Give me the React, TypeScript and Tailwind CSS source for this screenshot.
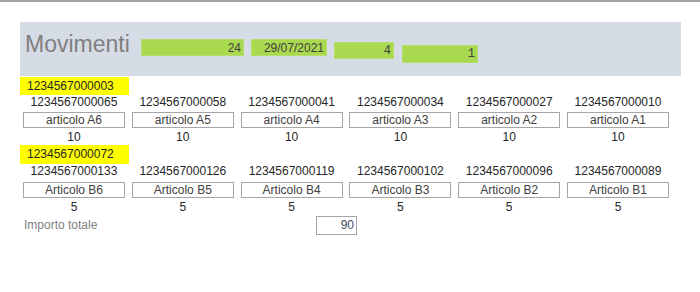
import React from 'react';

interface Item {
  code: string;
  name: string;
  qty: string;
}

const groupA: Item[] = [
  { code: '1234567000065', name: 'articolo A6', qty: '10' },
  { code: '1234567000058', name: 'articolo A5', qty: '10' },
  { code: '1234567000041', name: 'articolo A4', qty: '10' },
  { code: '1234567000034', name: 'articolo A3', qty: '10' },
  { code: '1234567000027', name: 'articolo A2', qty: '10' },
  { code: '1234567000010', name: 'articolo A1', qty: '10' },
];

const groupB: Item[] = [
  { code: '1234567000133', name: 'Articolo B6', qty: '5' },
  { code: '1234567000126', name: 'Articolo B5', qty: '5' },
  { code: '1234567000119', name: 'Articolo B4', qty: '5' },
  { code: '1234567000102', name: 'Articolo B3', qty: '5' },
  { code: '1234567000096', name: 'Articolo B2', qty: '5' },
  { code: '1234567000089', name: 'Articolo B1', qty: '5' },
];

const ItemRow: React.FC<{ items: Item[]; codeH: string }> = ({ items, codeH }) => (
  <div className="grid grid-cols-[repeat(6,102px)] gap-x-[6.8px] pl-[23px]">
    {items.map(it => (
      <div key={it.code} className="flex flex-col items-center">
        <div className={`${codeH} w-full flex items-end justify-center text-[#262626]`}>{it.code}</div>
        <div className="h-[16px] w-full border border-[#a6a6a6] bg-white flex items-center justify-center text-[#404040] leading-none">
          {it.name}
        </div>
        <div className="h-[17px] w-full flex items-center justify-center text-[#262626]">{it.qty}</div>
      </div>
    ))}
  </div>
);

export default function App() {
  return (
    <div className="w-[700px] h-[292px] bg-white overflow-hidden text-[12px]" style={{ fontFamily: '"Liberation Sans", Arial, sans-serif' }}>
      <div className="h-[2px] bg-[#a0a0a0]" />

      {/* Header */}
      <div className="mt-[20px] ml-[20px] w-[661px] h-[54px] bg-[#d6dce5] flex items-start">
        <div className="ml-[5px] mt-[7px] w-[116px] text-[23px] leading-[30px] text-[#7f7f7f]">Movimenti</div>
        <div className="mt-[17px] w-[103px] h-[17px] bg-[#a9d94f] border border-[#b5df6a] flex items-center justify-end pr-[2px] text-[#404040]">24</div>
        <div className="ml-[7px] mt-[17px] w-[76px] h-[17px] bg-[#a9d94f] border border-[#b5df6a] flex items-center justify-end pr-[2px] text-[#404040]">29/07/2021</div>
        <div className="ml-[7px] mt-[20px] w-[60px] h-[17px] bg-[#a9d94f] border border-[#b5df6a] flex items-center justify-end pr-[2px] text-[#404040]" style={{ fontFamily: '"Liberation Mono", monospace' }}>4</div>
        <div className="ml-[8px] mt-[23px] w-[76px] h-[18px] bg-[#a9d94f] border border-[#b5df6a] flex items-center justify-end pr-[2px] text-[#404040]" style={{ fontFamily: '"Liberation Mono", monospace' }}>1</div>
      </div>

      {/* Group A */}
      <div className="mt-[1px] ml-[20px] w-[109px] h-[18px] bg-[#ffff00] pl-[7px] leading-[18px] text-[#262626]">1234567000003</div>
      <ItemRow items={groupA} codeH="h-[17px] pb-[1px]" />

      {/* Group B */}
      <div className="ml-[20px] w-[109px] h-[19px] bg-[#ffff00] pl-[7px] leading-[19px] text-[#262626]">1234567000072</div>
      <ItemRow items={groupB} codeH="h-[18px] pb-[2px]" />

      {/* Total */}
      <div className="flex items-center h-[20px]">
        <div className="ml-[24px] w-[292px] text-[#808080]">Importo totale</div>
        <div className="w-[41px] h-[19px] border border-[#a6a6a6] flex items-center justify-end pr-[2px] text-[#3b4a5c]">90</div>
      </div>
    </div>
  );
}
